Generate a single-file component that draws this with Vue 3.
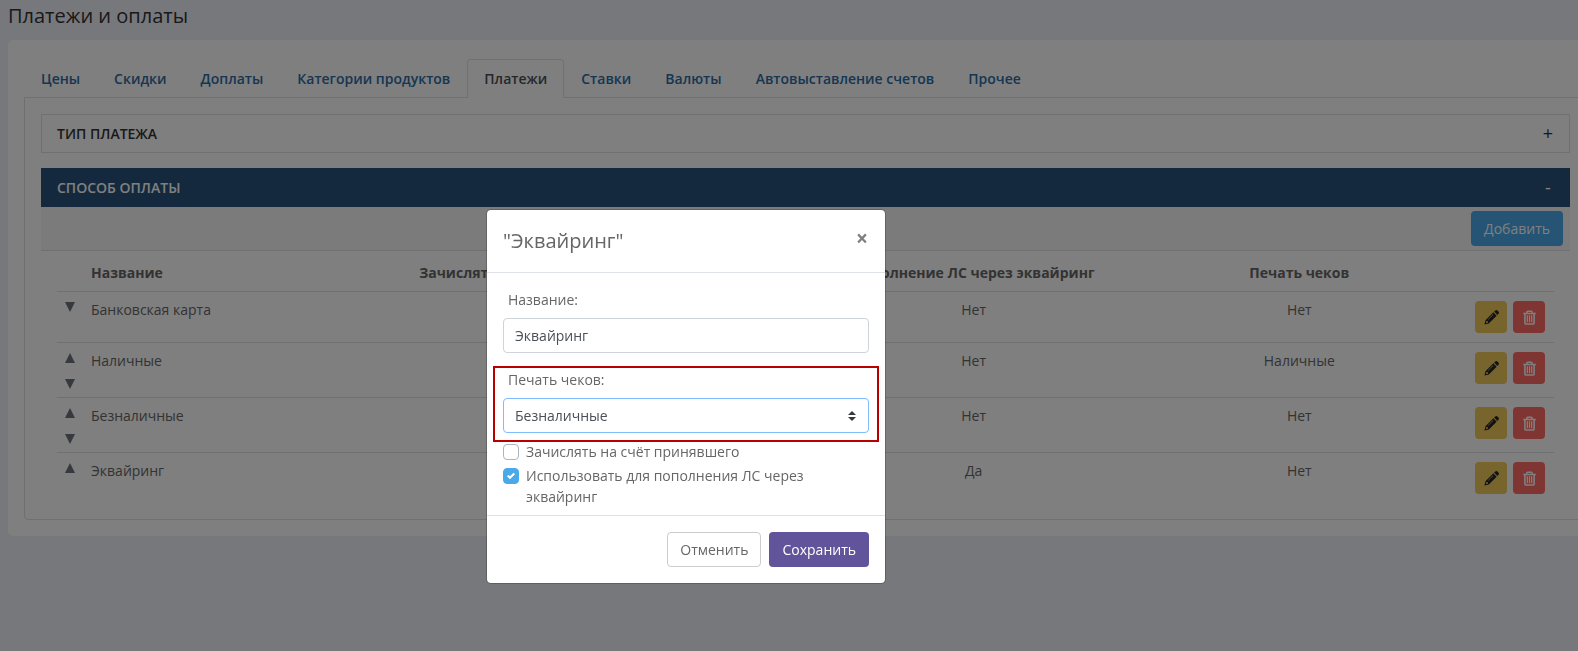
<script setup>
import { ref } from 'vue'

const tabs = [
  'Цены',
  'Скидки',
  'Доплаты',
  'Категории продуктов',
  'Платежи',
  'Ставки',
  'Валюты',
  'Автовыставление счетов',
  'Прочее',
]
const activeTab = ref('Платежи')

const methods = [
  { name: 'Банковская карта', refill: 'Нет', receipt: 'Нет' },
  { name: 'Наличные', refill: 'Нет', receipt: 'Наличные' },
  { name: 'Безналичные', refill: 'Нет', receipt: 'Нет' },
  { name: 'Эквайринг', refill: 'Да', receipt: 'Нет' },
]

const form = ref({
  name: 'Эквайринг',
  receipt: 'Безналичные',
  owner: false,
  refill: true,
})
</script>

<template>
  <main class="page">
    <h1 class="page-title">Платежи и оплаты</h1>

    <section class="card">
      <nav class="tabs">
        <a
          v-for="tab in tabs"
          :key="tab"
          href="#"
          :class="['tab', { 'tab--active': tab === activeTab }]"
          @click.prevent="activeTab = tab"
        >{{ tab }}</a>
      </nav>

      <div class="panel">
        <button type="button" class="section-head">
          <span>ТИП ПЛАТЕЖА</span><span class="sign">+</span>
        </button>

        <button type="button" class="section-head section-head--open">
          <span>СПОСОБ ОПЛАТЫ</span><span class="sign">-</span>
        </button>
        <div class="toolbar">
          <button type="button" class="btn btn--info">Добавить</button>
        </div>

        <div class="table-wrap">
          <table class="methods">
            <colgroup>
              <col class="col-order">
              <col class="col-name">
              <col class="col-owner">
              <col class="col-refill">
              <col class="col-receipt">
              <col>
            </colgroup>
            <thead>
              <tr>
                <th></th>
                <th class="left">Название</th>
                <th>Зачислять на счёт принявшего</th>
                <th>Пополнение ЛС через эквайринг</th>
                <th>Печать чеков</th>
                <th></th>
              </tr>
            </thead>
            <tbody>
              <tr v-for="(m, i) in methods" :key="m.name">
                <td class="order">
                  <div class="order-buttons">
                    <button v-if="i > 0" type="button" class="move" aria-label="Выше">
                      <svg viewBox="0 0 10 10"><path d="M5 0l5 10H0z" /></svg>
                    </button>
                    <button v-if="i < methods.length - 1" type="button" class="move" aria-label="Ниже">
                      <svg viewBox="0 0 10 10"><path d="M0 0h10L5 10z" /></svg>
                    </button>
                  </div>
                </td>
                <td class="left">{{ m.name }}</td>
                <td></td>
                <td>{{ m.refill }}</td>
                <td>{{ m.receipt }}</td>
                <td class="actions">
                  <div class="action-buttons">
                    <button type="button" class="icon-btn icon-btn--edit" aria-label="Изменить">
                      <svg viewBox="0 0 16 16">
                        <path fill-rule="evenodd" d="M10.8 1.700L12 .6a1.700 1.700 0 0 1 2.300 0l1.100 1.100a1.700 1.700 0 0 1 0 2.300l-1.100 1.200zM10 2.500L13.500 6l-8.400 8.400L.5 15.500l1.100-4.600zM2.600 11.700l-.6 2.300 2.300-.6-.1-1.500zM9.500 4.600L4 10.100l.4.400L9.900 5z" />
                      </svg>
                    </button>
                    <button type="button" class="icon-btn icon-btn--delete" aria-label="Удалить">
                      <svg viewBox="0 0 16 16" fill="none" stroke="currentColor" stroke-width="1.700">
                        <path d="M1.300 3.700h13.400M5.200 3.500V2.300c0-.6.400-1 1-1h3.600c.6 0 1 .4 1 1v1.200M3.100 4v9.800c0 .7.500 1.200 1.200 1.200h7.400c.7 0 1.200-.5 1.200-1.200V4" />
                        <path stroke-width="1.300" d="M5.700 5.500v7.500M8 5.500v7.500M10.300 5.500v7.500" />
                      </svg>
                    </button>
                  </div>
                </td>
              </tr>
            </tbody>
          </table>
        </div>
      </div>
    </section>
  </main>

  <div class="backdrop">
    <form class="modal" role="dialog" aria-labelledby="modal-title" @submit.prevent>
      <header class="modal-header">
        <h2 id="modal-title" class="modal-title">"Эквайринг"</h2>
        <button type="button" class="close" aria-label="Закрыть">×</button>
      </header>

      <div class="modal-body">
        <div class="field">
          <label for="method-name">Название:</label>
          <input id="method-name" v-model="form.name" type="text" class="control">
        </div>
        <div class="field field--marked">
          <label for="method-receipt">Печать чеков:</label>
          <select id="method-receipt" v-model="form.receipt" class="control control--select">
            <option>Нет</option>
            <option>Наличные</option>
            <option>Безналичные</option>
          </select>
        </div>
        <div class="checks">
          <label class="check">
            <input v-model="form.owner" type="checkbox">
            <span>Зачислять на счёт принявшего</span>
          </label>
          <label class="check">
            <input v-model="form.refill" type="checkbox">
            <span>Использовать для пополнения ЛС через эквайринг</span>
          </label>
        </div>
      </div>

      <footer class="modal-footer">
        <button type="button" class="btn btn--outline">Отменить</button>
        <button type="submit" class="btn btn--primary">Сохранить</button>
      </footer>
    </form>
  </div>
</template>

<style>
body {
  background: #eef0f8;
}
</style>

<style scoped>
*, *::before, *::after { box-sizing: border-box; }

.page, .backdrop {
  font: 14px/21px "Open Sans", "Noto Sans", sans-serif;
  color: #666;
}

button, input, select { font: inherit; }
button { cursor: pointer; }

.page {
  min-height: 100vh;
  padding: 0 0 16px 8px;
  overflow: hidden;
}

.page-title {
  margin: 0 0 8px;
  font-size: 20px;
  font-weight: 400;
  line-height: 32px;
  color: #333;
}

/* The card is wider than the page, its right edge is cut off */
.card {
  margin-right: -25px;
  padding: 19px 16px 16px;
  background: #fff;
  border-radius: 5px;
}

/* ─── Tabs ─────────────────────────────── */

.tabs {
  display: flex;
  margin-bottom: -1px;
}

.tab {
  padding: 8px 16px;
  border: 1px solid transparent;
  border-radius: 4px 4px 0 0;
  font-weight: 600;
  color: #2c6ca3;
  text-decoration: none;
}

.tab--active {
  background: #fff;
  border-color: #dee0e2;
  border-bottom-color: #fff;
  color: #495057;
  position: relative;
}

.panel {
  padding: 16px;
  border: 1px solid #dee0e2;
  border-radius: 0 0 4px 4px;
}

.section-head {
  display: flex;
  justify-content: space-between;
  width: 100%;
  margin-bottom: 15px;
  padding: 8px 15px;
  border: 1px solid #dee0e2;
  background: #fff;
  font-weight: 600;
  color: #333;
}

.section-head--open {
  margin-bottom: 0;
  border-color: #28527a;
  background: #28527a;
  color: #fff;
}

.sign {
  width: 12px;
  font-size: 18px;
  font-weight: 500;
  text-align: center;
}

.toolbar {
  display: flex;
  justify-content: flex-end;
  padding: 4px 7px 4px 16px;
  border-bottom: 1px solid #dee0e2;
  background: #f7f7f7;
}

/* ─── Table ─────────────────────────────── */

.table-wrap { padding: 4px 16px 0; }

.methods {
  width: 100%;
  table-layout: fixed;
  border-collapse: collapse;
}

.col-order { width: 26px; }
.col-name { width: 17%; }
.col-owner { width: 26.3%; }
.col-refill { width: 32.4%; }
.col-receipt { width: 11.1%; }

th, td {
  padding: 7px 8px 8px;
  text-align: center;
  vertical-align: top;
}

th { font-weight: 700; white-space: nowrap; }
td { border-top: 1px solid #dee0e2; }
.left { text-align: left; }

.order { padding-bottom: 1px; }

.order-buttons {
  display: flex;
  flex-direction: column;
  gap: 6px;
}

.move {
  display: flex;
  align-items: flex-start;
  height: 20px;
  padding: 3px 0 0;
  border: 0;
  background: none;
  color: #6c757d;
}
.move svg { width: 10px; height: 10px; fill: currentColor; }

.actions { padding: 9px; }

.action-buttons {
  display: flex;
  justify-content: flex-end;
  gap: 6px;
}

.icon-btn {
  display: flex;
  align-items: center;
  justify-content: center;
  width: 32px;
  height: 32px;
  padding: 0;
  border: 0;
  border-radius: 4px;
}
.icon-btn svg { width: 15px; height: 15px; }
.icon-btn--edit { background: #f0c85a; color: #212529; fill: currentColor; }
.icon-btn--delete { background: #ff6c64; color: #fff; }

/* ─── Buttons ─────────────────────────────── */

.btn {
  padding: 6px 12px;
  border: 1px solid transparent;
  border-radius: 4px;
}
.btn--info { background: #4aa9e9; color: #fff; }
.btn--outline { background: #fff; border-color: #ccc; color: #666; }
.btn--primary { background: #61549a; color: #fff; font-weight: 500; }

/* ─── Modal ─────────────────────────────── */

.backdrop {
  position: fixed;
  inset: 0;
  display: flex;
  align-items: flex-start;
  justify-content: center;
  padding: 209px 206px 0 0;
  background: rgba(0, 0, 0, 0.5);
}

.modal {
  width: 400px;
  background: #fff;
  background-clip: padding-box;
  border: 1px solid rgba(0, 0, 0, 0.2);
  border-radius: 5px;
}

.modal-header {
  display: flex;
  align-items: flex-start;
  justify-content: space-between;
  padding: 16px;
  border-bottom: 1px solid #dee2e6;
}

.modal-title {
  margin: 0;
  font-size: 20px;
  font-weight: 400;
  line-height: 30px;
}

.close {
  padding: 0 1px;
  border: 0;
  background: none;
  font-size: 21px;
  font-weight: 700;
  line-height: 24px;
  color: #808080;
}

.modal-body { padding: 16px 16px 8px; }

.field { margin-bottom: 16px; }

.field label {
  display: block;
  margin-bottom: 8px;
  padding-left: 5px;
}

.field--marked {
  position: relative;
  margin-bottom: 8px;
}

.field--marked::after {
  content: "";
  position: absolute;
  inset: -3px -10px -9px;
  border: 2px solid #b80000;
  pointer-events: none;
}

.control {
  display: block;
  width: 100%;
  height: 35px;
  padding: 6px 11px;
  border: 1px solid #ced4da;
  border-radius: 4px;
  background: #fff;
  color: #495057;
  outline: none;
}

.control--select {
  appearance: none;
  border-color: #80bdff;
  background: #fff url("data:image/svg+xml,%3csvg xmlns='http://www.w3.org/2000/svg' viewBox='0 0 4 5'%3e%3cpath fill='%23343a40' d='M2 0L0 2h4zm0 5L0 3h4z'/%3e%3c/svg%3e") no-repeat right 12px center / 8px 10px;
}

.checks {
  display: flex;
  flex-direction: column;
  gap: 3px;
}

.check {
  display: flex;
  align-items: flex-start;
  gap: 7px;
}

.check input {
  flex-shrink: 0;
  appearance: none;
  width: 16px;
  height: 16px;
  margin: 3px 0 0;
  border: 1px solid #adb5bd;
  border-radius: 4px;
  background: #fff;
}

.check input:checked {
  border-color: #4aa9e9;
  background: #4aa9e9 url("data:image/svg+xml,%3csvg xmlns='http://www.w3.org/2000/svg' viewBox='0 0 8 8'%3e%3cpath fill='%23fff' d='M6.564.75l-3.590 3.612-1.538-1.550L0 4.260l2.974 2.990L8 2.193z'/%3e%3c/svg%3e") no-repeat center / 8px 8px;
}

.modal-footer {
  display: flex;
  justify-content: flex-end;
  gap: 8px;
  padding: 16px;
  border-top: 1px solid #dee2e6;
}
</style>
